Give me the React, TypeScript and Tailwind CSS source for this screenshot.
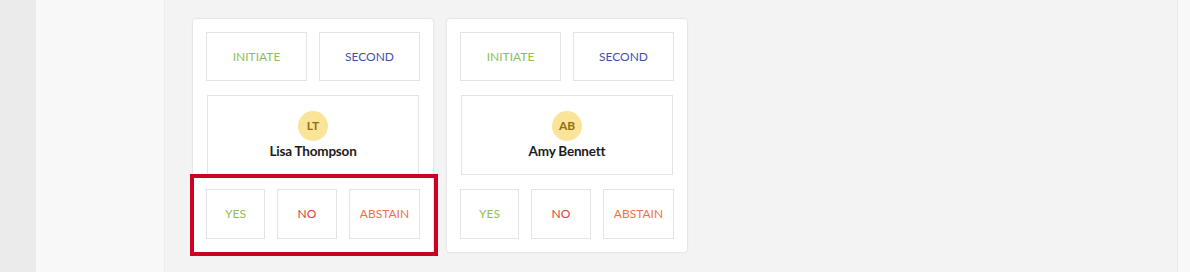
const members = [
  { initials: 'LT', name: 'Lisa Thompson', highlight: true },
  { initials: 'AB', name: 'Amy Bennett', highlight: false },
]

function VoteCard({ initials, name, highlight }: { initials: string; name: string; highlight: boolean }) {
  return (
    <div className="relative w-[240px] h-[233px] bg-white rounded-[3px] shadow-[0_0_2px_rgba(0,0,0,0.18)] px-[13px] pt-[13px]">
      <div className="flex gap-[12px]">
        <button className="w-[101px] h-[49px] border border-[#e3e3e3] text-[12px] text-[#8cc152]">INITIATE</button>
        <button className="w-[101px] h-[49px] border border-[#e3e3e3] text-[12px] text-[#4251b0]">SECOND</button>
      </div>
      <div className="mx-[1px] mt-[14px] h-[80px] border border-[#e3e3e3] flex flex-col items-center pt-[15px]">
        <div className="w-[30px] h-[30px] rounded-full bg-[#fbe398] flex items-center justify-center text-[12px] font-bold text-[#8f7010]">
          {initials}
        </div>
        <div className="mt-[1px] text-[13.5px] font-bold text-[#1b1b1b] leading-[18px] tracking-[-0.2px]">{name}</div>
      </div>
      <div className="flex gap-[12px] mt-[14px]">
        <button className="w-[59px] h-[50px] border border-[#e3e3e3] text-[12px] text-[#8cc152]">YES</button>
        <button className="w-[60px] h-[50px] border border-[#e3e3e3] text-[12px] text-[#d9433a]">NO</button>
        <button className="w-[71px] h-[50px] border border-[#e3e3e3] text-[12px] text-[#ef7243]">ABSTAIN</button>
      </div>
      {highlight && (
        <div className="absolute left-[-3px] top-[155px] w-[248px] h-[82px] border-[4px] border-[#cc0022] pointer-events-none" />
      )}
    </div>
  )
}

export default function App() {
  return (
    <div className="flex h-[272px] w-[1190px] bg-[#f3f3f3] font-['Lato','Liberation_Sans',sans-serif]">
      <div className="w-[36px] bg-[#ebebeb]" />
      <div className="w-[129px] bg-[#f8f8f8] border-r border-[#ececec]" />
      <div className="flex-1 flex gap-[14px] pl-[28px] pt-[19px]">
        {members.map((m) => (
          <VoteCard key={m.initials} {...m} />
        ))}
      </div>
      <div className="w-[13px] bg-[#f8f8f8] border-l border-[#ececec]" />
    </div>
  )
}
